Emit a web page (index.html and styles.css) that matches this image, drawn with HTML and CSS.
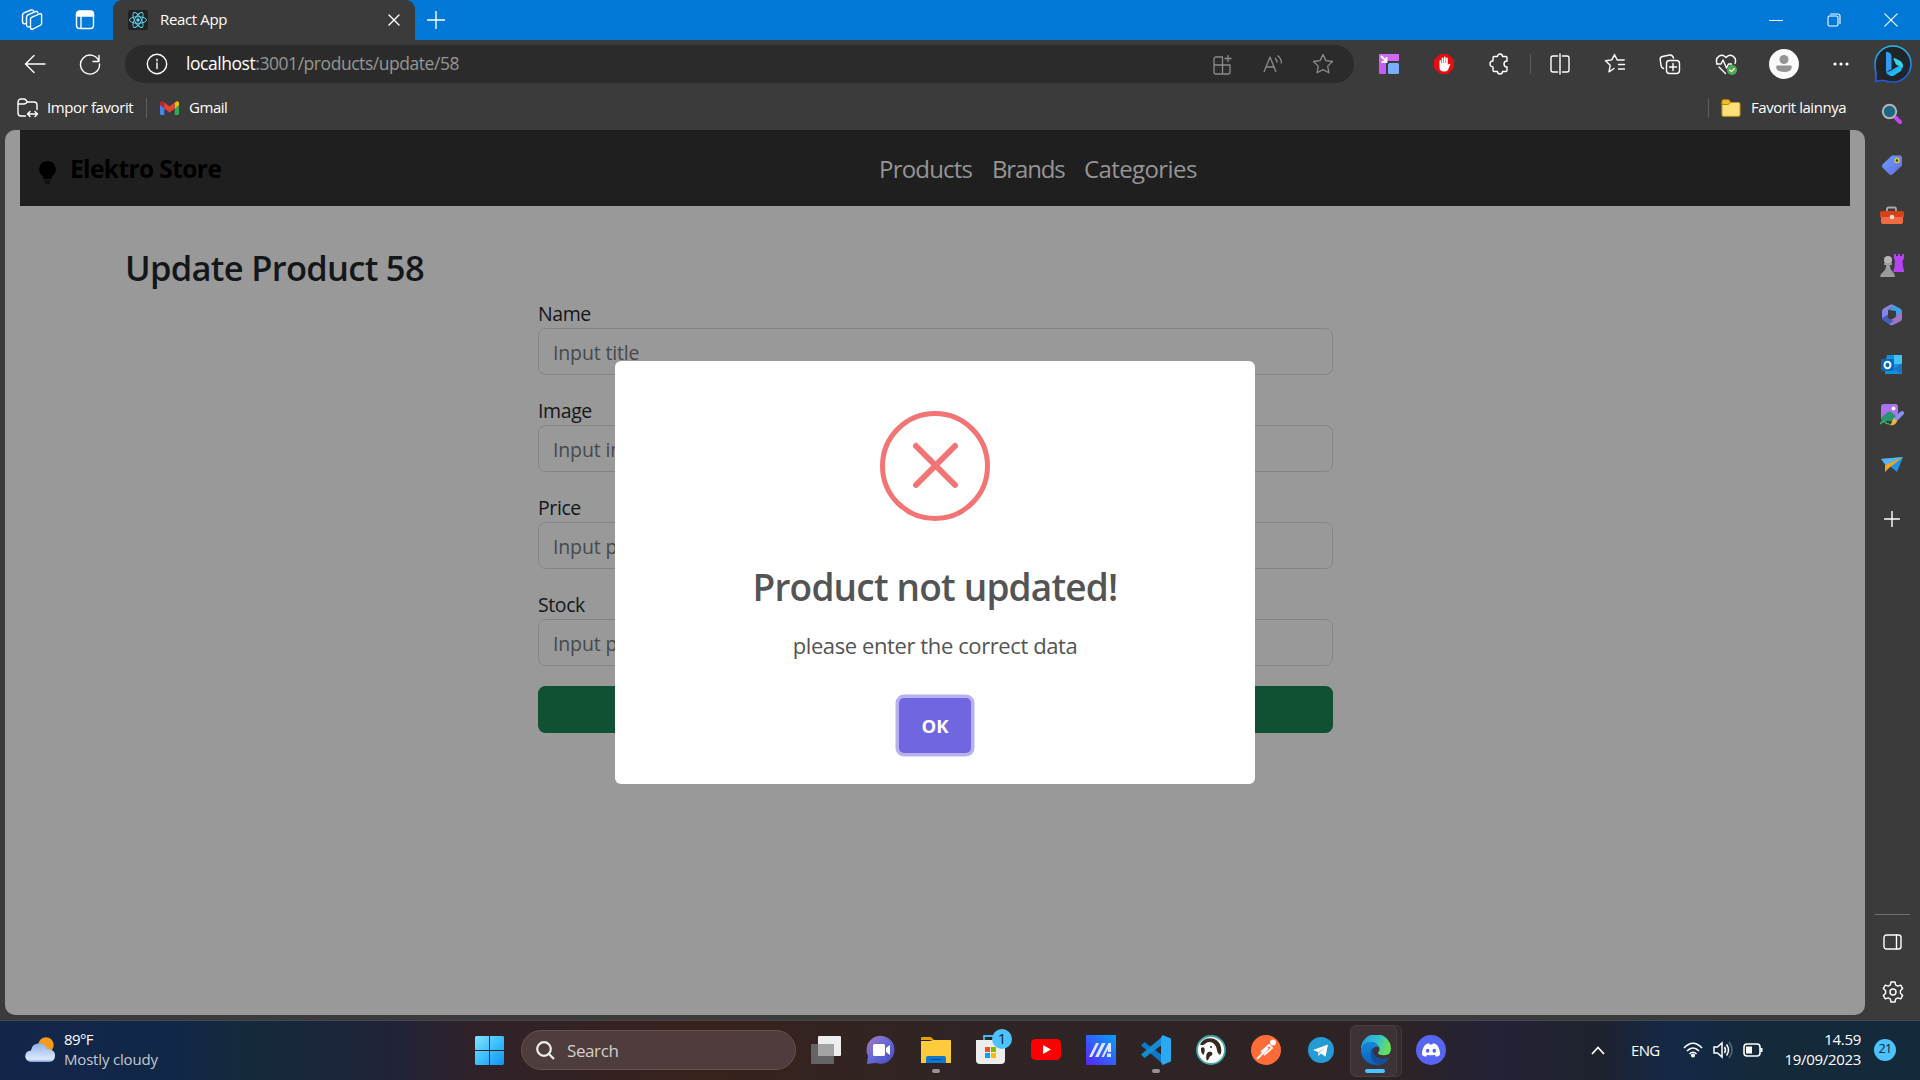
FILE: index.html
```html
<!DOCTYPE html>
<html lang="en">
<head>
<meta charset="utf-8">
<title>React App</title>
<link rel="stylesheet" href="styles.css">
</head>
<body>
<div class="screen">
  <header class="titlebar">
    <div class="tab-tools">
      <svg width="22" height="22" viewBox="0 0 22 22" class="line"><path d="M9.500 10Q9.500 8.800 10.600 8.300L18.500 4.800Q20.600 4.300 20.600 6.200V14.500Q20.600 15.600 19.500 16.200L12 20Q9.500 21 9.500 18.500Z"/><path d="M8.500 17.800Q5.500 18.300 5.500 15.500V8Q5.500 6.500 7 5.800L14.500 2.500Q16.500 2 16.800 4"/><path d="M4.500 14.800Q1.500 15.200 1.500 12.500V6Q1.500 4.500 3 3.800L10 1Q12 .6 12.500 2"/></svg>
      <svg width="20" height="20" viewBox="0 0 20 20" class="line"><rect x="1.500" y="1.500" width="17" height="17" rx="3"/><path d="M1.500 6V4a3 3 0 0 1 3-3h11a3 3 0 0 1 3 3v2z" fill="#fff"/><path d="M6 6v12"/></svg>
    </div>
    <div class="tab">
      <svg width="20" height="20" viewBox="0 0 20 20"><rect width="20" height="20" rx="2" fill="#222"/><g fill="none" stroke="#61dafb" stroke-width=".9"><ellipse cx="10" cy="10" rx="8.500" ry="3.300"/><ellipse cx="10" cy="10" rx="8.500" ry="3.300" transform="rotate(60 10 10)"/><ellipse cx="10" cy="10" rx="8.500" ry="3.300" transform="rotate(120 10 10)"/></g><circle cx="10" cy="10" r="1.700" fill="#61dafb"/></svg>
      <span class="tab-title">React App</span>
      <svg width="12" height="12" viewBox="0 0 12 12" class="line"><path d="M1 1l10 10M11 1 1 11"/></svg>
    </div>
    <svg class="new-tab line" width="18" height="18" viewBox="0 0 18 18"><path d="M9 .5v17M.5 9h17"/></svg>
    <div class="window-controls">
      <svg width="14" height="14" viewBox="0 0 14 14" class="line thin"><path d="M.5 7.500h13"/></svg>
      <svg width="14" height="14" viewBox="0 0 14 14" class="line thin"><rect x="1" y="3" width="10" height="10" rx="1.500"/><path d="M3.500 1H11q2 0 2 2v7.500"/></svg>
      <svg width="14" height="14" viewBox="0 0 14 14" class="line thin"><path d="M.8.8l12.400 12.400M13.200.8.800 13.200"/></svg>
    </div>
  </header>

  <div class="browser">
    <div class="main-column">
      <div class="toolbar">
        <svg class="back line" width="22" height="20" viewBox="0 0 22 20"><path d="M21 10H1.500M10 1.500 1.500 10l8.500 8.500"/></svg>
        <svg class="reload line" width="22" height="22" viewBox="0 0 22 22"><path d="M20 8.500A9.500 9.500 0 1 0 20.500 11M20 2.500v6h-6"/></svg>
        <div class="address">
          <svg width="22" height="22" viewBox="0 0 22 22" class="line"><circle cx="11" cy="11" r="9.700"/><path d="M11 10v5.500M11 6.200v1.600"/></svg>
          <span class="url"><b>localhost</b>:3001/products/update/58</span>
          <div class="address-actions">
            <svg width="22" height="22" viewBox="0 0 22 22"><path d="M11 4H4a2 2 0 0 0-2 2v13a2 2 0 0 0 2 2h12a2 2 0 0 0 2-2v-7H2M10.500 4v17M16 2v7M12.500 5.500h7"/></svg>
            <svg width="22" height="22" viewBox="0 0 22 22"><path d="M2 19 8 4l6 15M4 14h8M13 5q2 1.500 2 4.500M15.500 2.500q4 3 4 8"/></svg>
            <svg width="22" height="22" viewBox="0 0 22 22"><path d="M11 1.500l2.900 6.100 6.600.9-4.800 4.600 1.200 6.700-5.900-3.200-5.900 3.200 1.200-6.700L1.500 8.500l6.600-.9z"/></svg>
          </div>
        </div>
        <div class="extensions">
          <svg width="20" height="20" viewBox="0 0 20 20"><path d="M1 0h18q1 0 1 1v6H7v13H1q-1 0-1-1V1q0-1 1-1z" fill="#c45cf5"/><path d="M1 0h18q1 0 1 1v6H0V1q0-1 1-1z" fill="#cf6bf6"/><rect x="9" y="9" width="11" height="11" rx="1.500" fill="#79adff"/><path d="M2 2l5 5M7.500 3v5h-5" stroke="#fff" stroke-width="1.800" fill="none"/></svg>
          <svg width="22" height="22" viewBox="0 0 22 22"><path d="M7 1h8l6 6v8l-6 6H7l-6-6V7z" fill="#e60d12"/><path d="M6.500 11V7.500q1-1 1.600 0V10h.6V5q1-1 1.700 0v5h.5V4q1-1 1.700 0v6h.5V5q1-1 1.700 0v7q2-2 2.500-.5L15 17q-1 1.500-4 1.500-4.500 0-4.500-4z" fill="#fff"/></svg>
          <svg width="22" height="22" viewBox="0 0 22 22" class="line"><path d="M5.200 3.500h3.300a2.500 2.500 0 0 1 5 0h3.300q1.200 0 1.200 1.200V8a2.800 2.800 0 1 0 0 6v3.300q0 1.200-1.200 1.200h-3.300a2.500 2.500 0 0 1-5 0H5.200Q4 18.500 4 17.300V14a2.800 2.800 0 1 1 0-6V4.700q0-1.200 1.200-1.200z"/></svg>
        </div>
        <i class="rule"></i>
        <div class="browser-tools">
          <svg width="22" height="22" viewBox="0 0 22 22" class="line"><path d="M8.500 3H4a2 2 0 0 0-2 2v12a2 2 0 0 0 2 2h4.500M13.500 3H18a2 2 0 0 1 2 2v12a2 2 0 0 1-2 2h-4.500M11 1v20"/></svg>
          <svg width="22" height="22" viewBox="0 0 22 22" class="line"><path d="M10 15.500l-5 3.300 1.200-6.500-4.700-4.500 6.300-.9L10.500 1.500 13.200 7h7M14.500 11.500h6M14.500 16h6"/></svg>
          <svg width="22" height="22" viewBox="0 0 22 22" class="line"><rect x="7.500" y="7.500" width="13" height="13" rx="3"/><path d="M14 10.500v7M10.500 14h7M4.500 15.500Q2.500 15 2 12.500L1.200 6.500Q1 4 3.500 3.500l7-1.500Q13.500 1.500 14.500 5"/></svg>
          <svg width="22" height="22" viewBox="0 0 22 22" class="line"><path d="M2 10.500C-.5 4 7-.5 11 4.500c4-5 11.500-.5 9 6M4 14l6.500 6.500M1.500 11H6l2-4 3.500 8 2-4h3"/><circle cx="17" cy="17" r="5" fill="#4ead50" stroke="none"/><path d="M14.800 17l1.600 1.600 3-3" stroke-width="1.200"/></svg>
        </div>
        <div class="account">
          <svg width="30" height="30" viewBox="0 0 30 30"><circle cx="15" cy="15" r="15" fill="#fafafa"/><circle cx="15" cy="10.500" r="4.500" fill="#949494"/><path d="M8 16.500h14q.8 0 .8 1.200 0 5.300-7.800 5.300t-7.800-5.300q0-1.200.8-1.200z" fill="#949494"/></svg>
          <svg width="18" height="6" viewBox="0 0 18 6" fill="#fff"><circle cx="3" cy="3" r="1.600"/><circle cx="9" cy="3" r="1.600"/><circle cx="15" cy="3" r="1.600"/></svg>
        </div>
      </div>

      <div class="bookmarks">
        <svg width="22" height="20" viewBox="0 0 22 20" class="line"><path d="M8.500 18H4a3 3 0 0 1-3-3V4a3 3 0 0 1 3-3h3q1 0 2 1.200L10.500 4H17a3 3 0 0 1 3 3v4.500M1.500 6H7q1.500 0 3.500-2M10.500 16h10M13 13.500 10.500 16l2.500 2.500M18 13.500l2.500 2.500-2.500 2.500"/></svg>
        <span class="bm-import">Impor favorit</span>
        <i class="rule"></i>
        <svg width="19" height="14" viewBox="0 0 19 14"><path d="M0 2h4.300v12H1.500Q0 14 0 12.500z" fill="#4285f4"/><path d="M14.700 2H19v10.500q0 1.500-1.500 1.500h-2.800z" fill="#34a853"/><path d="M14.700 2Q17-1 19 1.500V4l-4.300 3.500z" fill="#fbbc04"/><path d="M0 4V1.800Q1.500-1 4.300 1.500v6z" fill="#c5221f"/><path d="M4.300 1.500l5.200 4 5.200-4v6l-5.200 4-5.200-4z" fill="#ea4335"/></svg>
        <span class="bm-gmail">Gmail</span>
        <div class="bookmarks-other">
          <i class="rule"></i>
          <svg width="20" height="18" viewBox="0 0 20 18"><path d="M1 3v13q0 1.300 1.300 1.300h15.400q1.300 0 1.300-1.300V5q0-1.500-1.300-1.500H10z" fill="#ffdf7c" stroke="#c89614"/><path d="M1 5.500V2Q1 .7 2.300.7H7q1 0 1.500.8l1 1.700-2 2.300z" fill="#f0bd2a" stroke="#b88508"/></svg>
          <span class="bm-other">Favorit lainnya</span>
        </div>
      </div>

      <main class="viewport">
        <nav class="navbar">
          <div class="brand">
            <svg width="17" height="23" viewBox="0 0 17 23"><path d="M8.500 0a8.200 8.200 0 0 1 4.300 15.200V18H4.200v-2.800A8.200 8.200 0 0 1 8.500 0zM5 19.500h7v1H5zM6 21.500h5v1H6z"/></svg>
            <span>Elektro Store</span>
          </div>
          <div class="nav-links"><a class="products">Products</a><a class="brands">Brands</a><a class="categories">Categories</a></div>
        </nav>
        <h2 class="page-title"><span>Update Product 58</span></h2>
        <form class="product-form">
          <label>Name</label><div class="field">Input title</div>
          <label>Image</label><div class="field">Input image</div>
          <label>Price</label><div class="field">Input price</div>
          <label>Stock</label><div class="field">Input price</div>
          <div class="submit"></div>
        </form>
        <section class="modal">
          <svg width="110" height="110" viewBox="0 0 110 110" fill="none" stroke="#f27474" stroke-width="5"><circle cx="55" cy="55" r="52.500"/><path d="M36 35 75 74M75 35 36 74" stroke-width="6" stroke-linecap="round"/></svg>
          <h1>Product not updated!</h1>
          <p>please enter the correct data</p>
          <button type="button">OK</button>
        </section>
      </main>
    </div>

    <aside class="sidebar">
      <svg class="bing" width="38" height="38" viewBox="0 0 38 38"><defs><linearGradient id="bingRing" x1="0" y1="0" x2="0" y2="1"><stop offset="0" stop-color="#27bdf0"/><stop offset="1" stop-color="#2455d8"/></linearGradient><linearGradient id="bingB" x1="0" y1="0" x2="1" y2="1"><stop offset="0" stop-color="#2870f4"/><stop offset=".6" stop-color="#1dbdf3"/><stop offset="1" stop-color="#45e0d0"/></linearGradient></defs><path d="M1.500 36.500Q2.500 33 2 28 1 24 1 19A18 18 0 1 1 19 37q-4 0-8-1.200-4-.8-9.500.7z" fill="#20252a" stroke="url(#bingRing)" stroke-width="1.600"/><path d="M12 8q0-2 2-1l2 1.200q1.500 1 1.500 3V24l-5.500 3z" fill="#2f9df5"/><path d="M19.500 14q0-1.500 2-.5l4 2q3.500 2 3.500 5.500 0 1.500-1 2.500-1-1.500-3-2.500l-3-1.500z" fill="#35d6ea"/><path d="M12 25q1 2.500 4 1l9-5.300q3 1.300 2.800 3.300-.3 1.500-2 2.800l-6 3.700q-2 1.200-4 0L13 29q-1-1.300-1-4z" fill="url(#bingB)"/></svg>
      <div class="side-apps">
        <svg width="22" height="22" viewBox="0 0 22 22"><path d="M14 14l5 5" stroke="#c843f2" stroke-width="4" stroke-linecap="round"/><circle cx="8.500" cy="8.500" r="6.700" fill="#216483" stroke="#b0b5b6" stroke-width="2"/></svg>
        <svg width="22" height="22" viewBox="0 0 22 22"><defs><linearGradient id="tag" x1="0" y1="0" x2="1" y2="1"><stop offset="0" stop-color="#64a4fb"/><stop offset="1" stop-color="#6b67e7"/></linearGradient></defs><path d="M11 1.500h8q2 0 2 2v8L11.500 20.500q-2 1-3.500-.5l-6.500-6.500q-1-1.500 0-3z" fill="url(#tag)"/><circle cx="16" cy="6.500" r="2" fill="#334" stroke="#f3cf22" stroke-width="1.300"/></svg>
        <svg width="24" height="20" viewBox="0 0 24 20"><path d="M7 6V3q0-1.500 1.500-1.500h6Q16 1.500 16 3v3" stroke="#aaa" stroke-width="1.800" fill="none"/><rect x="1" y="6" width="22" height="12" rx="2" fill="#f06a42"/><path d="M0 7q0-2 2-2h20q2 0 2 2v4H0z" fill="#d84118"/><circle cx="12" cy="11" r="2.300" fill="#ddd"/></svg>
        <svg width="24" height="24" viewBox="0 0 24 24"><path d="M14 0h2v2h2V0h2v2h2V0h2v4.500L22.500 7l.7 7 .8 1.500V18H13.500v-2.500l1-1.500.5-7L14 4.500z" fill="#b443f2"/><circle cx="8" cy="6" r="4" fill="#b5b5b5"/><path d="M4 9h8v2h-2q0 5 3 7 2 2 2 5H0q0-3 3-5 3-2 3-7H4z" fill="#9b9b9b"/></svg>
        <svg width="22" height="22" viewBox="0 0 22 22"><path d="M9 .8 2.500 4.500Q1 5.500 1 7.500v8l6-3V7q0-1 1-1.500L14 2 12 .8q-1.500-.8-3 0z" fill="#8884e2"/><path d="M12 .8l7.500 4Q21 6 21 7.500V14l-6-3.500V7L8 6l5-3.500z" fill="#37a4e9"/><path d="M21 7.500v7q0 2-1.500 2.700L12 21q-2 .8-3.500-.2L8 17l6-3.500q1-.7 1-2z" fill="#9c75c9"/><path d="M1 14l6-3.500V14l5.500 3L8 20.500l-5-3.500q-2-1-2-3z" fill="#415fb8"/></svg>
        <svg width="22" height="20" viewBox="0 0 22 20"><path d="M6 0h14q1 0 1 1v18H4V9z" fill="#1490df"/><path d="M13 0h7q1 0 1 1v8h-8z" fill="#41c4f4"/><path d="M21 8v12l-8-6z" fill="#1b74c7"/><rect y="4" width="13" height="12" rx="1.200" fill="#0868be"/><ellipse cx="6.500" cy="10" rx="3" ry="3.300" stroke="#fff" stroke-width="1.900" fill="none"/></svg>
        <svg width="24" height="24" viewBox="0 0 24 24"><rect x="1" y="1" width="17" height="16" rx="2.500" fill="#ab72ec"/><path d="M1 15 8 9q1.500-1 3 0l7 6v2q0 1-2 1H3q-2 0-2-2z" fill="#27956b"/><circle cx="13.500" cy="5.500" r="1.900" fill="#fff"/><path d="M22 10 15 17" stroke="#8a90f5" stroke-width="4" stroke-linecap="round"/><path d="M14 15l3 3q-1 5-8 4 3-1 3-4z" fill="#f0b63b"/><path d="M0 21q4-4 5-2t4 2" stroke="#3abd7c" stroke-width="1.500" fill="none"/></svg>
        <svg width="22" height="16" viewBox="0 0 22 16"><path d="M0 2 22 0 16 15z" fill="#2492e4"/><path d="M22 0 4 8v7l4-4z" fill="#f3a713"/><path d="M0 2 22 0 4.500 8z" fill="#5bb4f4"/></svg>
        <svg width="16" height="16" viewBox="0 0 16 16" class="line"><path d="M8 .5v15M.5 8h15"/></svg>
      </div>
      <div class="side-bottom">
        <svg width="20" height="16" viewBox="0 0 20 16" class="line"><rect x="1" y="1" width="17" height="14" rx="2.500"/><path d="M13.500 1v14"/></svg>
        <svg width="22" height="22" viewBox="0 0 22 22" class="line"><path d="M9 1h4l.7 3 2 1.100 3-.9 2 3.400-2.300 2.200v2.400l2.300 2.200-2 3.400-3-.9-2 1.100L13 21H9l-.7-3-2-1.100-3 .9-2-3.400 2.300-2.200V9.800L1.300 7.600l2-3.400 3 .9 2-1.100z"/><circle cx="11" cy="11" r="3"/></svg>
      </div>
    </aside>
  </div>

  <footer class="taskbar">
    <div class="weather">
      <svg width="30" height="26" viewBox="0 0 30 26"><defs><linearGradient id="cloud" x1="0" y1="0" x2="0" y2="1"><stop offset="0" stop-color="#8fb2ef"/><stop offset=".85" stop-color="#dce9fb"/><stop offset="1" stop-color="#7899dd"/></linearGradient></defs><circle cx="21" cy="8" r="7.700" fill="#f49a1c"/><path d="M6 25a5.800 5.800 0 0 1 0-11.600Q7 6.500 14 6.500q6.500 0 8 5.500 8 0 8 6.500T24 25z" fill="url(#cloud)"/></svg>
      <div><span class="temp">89°F</span><span class="sky">Mostly cloudy</span></div>
    </div>
    <div class="task-center">
      <svg width="29" height="29" viewBox="0 0 29 29"><defs><linearGradient id="win" x1="0" y1="0" x2="1" y2="1"><stop offset="0" stop-color="#83e0fd"/><stop offset=".5" stop-color="#3dc0fd"/><stop offset="1" stop-color="#0f94f5"/></linearGradient></defs><path d="M1 0h13v14H0V1zM15 0h13l1 1v13H15zM0 15h14v14H1l-1-1zM15 15h14v13l-1 1H15z" fill="url(#win)"/></svg>
      <div class="search"><svg width="19" height="19" viewBox="0 0 19 19" fill="none" stroke="#eee" stroke-width="2.200"><circle cx="8" cy="8" r="6.800"/><path d="M13 13l5 5"/></svg><span>Search</span></div>
      <div class="apps">
        <div class="app"><svg width="30" height="28" viewBox="0 0 30 28"><rect y="8" width="23" height="20" rx="1" fill="#646464"/><rect x="7" width="23" height="20" rx="1" fill="#eee"/><rect x="7" y="8" width="16" height="12" fill="#a4a4a4"/></svg></div>
        <div class="app"><svg width="30" height="30" viewBox="0 0 30 30"><defs><linearGradient id="chat" x1="0" y1="0" x2="1" y2="1"><stop offset="0" stop-color="#a879bd"/><stop offset=".5" stop-color="#6369d5"/><stop offset="1" stop-color="#4948b9"/></linearGradient></defs><path d="M1 29l1-8A14 14 0 1 1 10 28z" fill="url(#chat)"/><rect x="7" y="9" width="12" height="12" rx="1.500" fill="#fff"/><path d="M20 13l4-3v10l-4-3z" fill="#fff"/></svg></div>
        <div class="app running"><svg width="30" height="28" viewBox="0 0 30 28"><path d="M0 4V2q0-1 1-1h9l3 3h-3z" fill="#e1a008"/><path d="M0 5h9l3-1h17q1 0 1 1v22H0z" fill="#ffca3b"/><path d="M5 27v-5q0-2 2-2h16q2 0 2 2v5z" fill="#0f78cf"/><path d="M9 23.500h12" stroke="#0a4f93"/></svg></div>
        <div class="app"><svg width="30" height="30" viewBox="0 0 30 30"><path d="M8 6V1h13v5" fill="none" stroke="#3bbcf3" stroke-width="1.800"/><path d="M0 5h29v20q0 4-4 4H4q-4 0-4-4z" fill="#ededed"/><path d="M9 12h5v5H9z" fill="#f25022"/><path d="M15 12h5v5h-5z" fill="#7fba00"/><path d="M9 18h5v5H9z" fill="#00a4ef"/><path d="M15 18h5v5h-5z" fill="#ffb900"/></svg><span class="badge">1</span></div>
        <div class="app"><svg width="30" height="22" viewBox="0 0 30 22"><rect width="30" height="21" rx="4.500" fill="#f00"/><path d="M12 6v9l8-4.500z" fill="#fff"/></svg></div>
        <div class="app"><svg width="30" height="30" viewBox="0 0 30 30"><defs><linearGradient id="armoury" x1="1" y1="0" x2="0" y2="1"><stop offset="0" stop-color="#05a1ff"/><stop offset="1" stop-color="#5b23f8"/></linearGradient></defs><path d="M0 0h30v30H0z" fill="url(#armoury)"/><path d="M3 22 10 8h3L6 22zM9 22l7-14h3.500l-7 14zM15.500 22 22.500 8H25v9h-3.200V14l-4 8z" fill="#dce7ff"/><path d="M21 18.500h4V22h-4z" fill="#dce7ff"/></svg></div>
        <div class="app running"><svg width="30" height="30" viewBox="0 0 30 30"><path d="M0 10.500 3.500 7 22 21v8z" fill="#0b79c7"/><path d="M0 19.500 3.500 23 22 9V1z" fill="#158bd3"/><path d="M21.500 0 30 3.500v23L21.500 30 20 27V3z" fill="#2aa9f3"/></svg></div>
        <div class="app"><svg width="30" height="30" viewBox="0 0 30 30"><circle cx="15" cy="15" r="14" fill="#fff" stroke="#48a6a8" stroke-width="1.800"/><path d="M4 9.500Q6 5 11 3.500 17 2.300 21 5.500q3 2.500 4 7 1 4.500-1 7.500-2.500-1-3-4.500-.5-5-4-7.500-4-2-7.500.5Q7 11 4 9.500z" fill="#352921"/><path d="M5 13q2-1.500 3.500 0 1 3-1 7Q4.500 18 5 13z" fill="#352921"/><path d="M10.500 19q1-2.500 3.500-2.500 2.500.3 2.500 2.500-.5 2-2.500 2.300-1 2.700-3 4.700-1.500-3-.5-7z" fill="#352921"/><circle cx="15" cy="12" r="1" fill="#352921"/></svg></div>
        <div class="app"><svg width="30" height="30" viewBox="0 0 30 30"><circle cx="15" cy="15" r="15" fill="#ff6c37"/><circle cx="22" cy="7.500" r="3" fill="#fff"/><path d="M6 24 17 13M10 17l8-7 3 3-8 7" stroke="#fff" stroke-width="1.800" fill="none"/></svg></div>
        <div class="app"><svg width="26" height="26" viewBox="0 0 26 26"><circle cx="13" cy="13" r="13" fill="#259bd5"/><path d="M5 13 20 7.500l-2.500 12.200-4.500-3.300-2.500 2.500-.5-4z" fill="#fff"/><path d="M10 15l7.500-5.500-5.500 6-1.500 3.400z" fill="#b7d7e9"/></svg></div>
        <div class="app active"><svg width="30" height="30" viewBox="0 0 30 30"><defs><linearGradient id="edgeTop" x1="0" y1="0" x2="1" y2=".3"><stop offset="0" stop-color="#209bdd"/><stop offset=".6" stop-color="#35c3cf"/><stop offset="1" stop-color="#66df5a"/></linearGradient><linearGradient id="edgeSide" x1="0" y1="0" x2="0" y2="1"><stop offset="0" stop-color="#1689dc"/><stop offset="1" stop-color="#0b62bb"/></linearGradient></defs><path d="M0 14.500A15 15 0 0 1 30 13.500q0 7-7.500 6.700-5 0-5.500-2.200 0-.7 1-1.800 1-1.600 0-4Q15.500 7 9.500 7 2.500 7.500 0 14.500z" fill="url(#edgeTop)"/><path d="M0 15q1-8.300 9.500-8.300 6.500.3 8.500 5.500-5-1.500-6.500 3-1 5 3.500 9 5 4 11.500 1.500Q22 30 15 30A15 15 0 0 1 0 15z" fill="url(#edgeSide)"/><path d="M12.500 12q-2 5.500 2 9 5 4.500 12.500 1.500 1-.3.600.8-3.100 5.700-9.600 6.200Q10 28 9.500 19q0-4.500 3-7z" fill="#154f97"/></svg></div>
        <div class="app"><svg width="30" height="30" viewBox="0 0 30 30"><circle cx="15" cy="15" r="15" fill="#5865f2"/><path d="M9 10q2-1.500 4-1.700l.7 1.200h2.600l.7-1.200q2 .2 4 1.700 3.500 5 3 10-2 1.500-4 1.800l-1.200-2q-3.800 1-7.600 0l-1.200 2Q8 21.500 6 20q-.5-5 3-10z" fill="#fff"/><ellipse cx="11.700" cy="15.700" rx="1.800" ry="2" fill="#5865f2"/><ellipse cx="18.300" cy="15.700" rx="1.800" ry="2" fill="#5865f2"/></svg></div>
      </div>
    </div>
    <div class="tray">
      <svg class="chevron" width="14" height="9" viewBox="0 0 14 9" fill="none" stroke="#fff" stroke-width="1.800"><path d="M1 8l6-6.500L13 8"/></svg>
      <span class="lang">ENG</span>
      <div class="status">
        <svg width="20" height="16" viewBox="0 0 20 16" fill="none" stroke="#fff" stroke-width="1.600"><path d="M1 6q9-9.500 18 0M4 9q6-6 12 0M6.500 12q3.500-3.500 7 0"/><circle cx="10" cy="13.500" r="1.300" fill="#fff"/></svg>
        <svg width="20" height="18" viewBox="0 0 20 18" fill="none" stroke="#fff" stroke-width="1.500"><path d="M1 6h3.500L9 2v14l-4.500-4H1zM11.500 6q2 3 0 6M13.500 3.500q4 5.500 0 11"/><path d="M16 1q6 8 0 16" stroke="#596a77"/></svg>
        <svg width="20" height="14" viewBox="0 0 20 14" fill="none" stroke="#fff" stroke-width="1.600"><rect x="1" y="1" width="16" height="12" rx="3"/><path d="M3 3.500h6v7H3z" fill="#fff" stroke="none"/><path d="M18.500 5v4" stroke-width="2"/></svg>
      </div>
      <div class="clock"><span class="time">14.59</span><span class="date">19/09/2023</span></div>
      <span class="notice">21</span>
    </div>
  </footer>
</div>
</body>
</html>
```
FILE: styles.css
```css
* { box-sizing: border-box; }
body {
  margin: 0;
  overflow: hidden;
  font-family: "Open Sans", "Noto Sans", sans-serif;
}
svg { display: block; flex: none; }
.line { fill: none; stroke: #fff; stroke-width: 1.4; stroke-linecap: round; stroke-linejoin: round; }
.thin { stroke-width: 1.1; }
.rule { flex: none; width: 1px; height: 20px; background: #5f5f5f; }
span, a, label, h1, p { white-space: nowrap; }

.screen { width: 1920px; height: 1080px; display: flex; flex-direction: column; background: #3b3b3b; color: #fff; }

/* Title bar */
.titlebar { height: 40px; display: flex; align-items: center; background: #0078d7; }
.tab-tools { width: 113px; padding-left: 21px; display: flex; align-items: center; gap: 32px; }
.tab { width: 302px; height: 40px; padding: 0 15px 0 15px; display: flex; align-items: center; background: #3b3b3b; border-radius: 9px 9px 0 0; }
.tab-title { flex: 1; margin-left: 12px; padding-bottom: 2px; font-size: 15px; letter-spacing: -.35px; }
.new-tab { margin-left: 12px; }
.window-controls { margin-left: auto; padding-right: 22px; display: flex; gap: 43.500px; }

.browser { flex: 1; display: flex; min-height: 0; }
.main-column { width: 1865px; display: flex; flex-direction: column; }

/* Toolbar */
.toolbar { height: 48px; display: flex; align-items: center; }
.back { margin-left: 24px; }
.reload { margin-left: 33px; }
.address { width: 1229px; height: 38px; margin-left: 24px; padding: 0 20px 0 21px; display: flex; align-items: center; border-radius: 19px; background: #2b2b2b; }
.url { margin-left: 18px; padding-bottom: 2px; font-size: 17.500px; letter-spacing: -.45px; color: #969696; }
.url b { font-weight: 400; color: #fff; }
.address-actions { margin-left: auto; display: flex; gap: 28px; }
.address-actions svg { fill: none; stroke: #8c8c8c; stroke-width: 1.3; stroke-linejoin: round; }
.extensions { margin-left: 25px; display: flex; align-items: center; gap: 34px; }
.extensions + .rule { margin-left: 19px; }
.browser-tools { margin-left: 18px; display: flex; gap: 33.200px; }
.account { margin-left: 32px; display: flex; align-items: center; gap: 33px; }

/* Bookmark bar */
.bookmarks { height: 42px; display: flex; align-items: center; padding: 0 19px 3px 17px; font-size: 15px; }
.bookmarks span { padding-bottom: 2px; }
.bm-import { margin: 0 12px 0 8px; width: 87px; letter-spacing: -.4px; }
.bookmarks > .rule + svg { margin-left: 13px; }
.bm-gmail { margin-left: 10px; letter-spacing: -.45px; }
.bookmarks-other { margin-left: auto; display: flex; align-items: center; }
.bookmarks-other svg { margin: 0 10px 0 12px; }
.bm-other { width: 95px; letter-spacing: -.45px; }

/* Web page under the dialog */
.viewport { position: relative; width: 1860px; height: 885px; margin-left: 5px; padding: 0 15px; border-radius: 10px; background: #999; overflow: hidden; }
.navbar { height: 76px; padding: 0 18px; display: flex; align-items: center; background: #1f1f1f; }
.brand { width: 841px; display: flex; align-items: center; gap: 14px; color: #000; font-size: 24.500px; font-weight: 700; letter-spacing: -.6px; }
.brand svg { margin-left: 1px; margin-top: 8px; }
.nav-links { display: flex; gap: 20px; font-size: 24px; color: #959595; }
.products { width: 93px; letter-spacing: -.8px; }
.brands { width: 72px; letter-spacing: -1.150px; }
.categories { letter-spacing: -.6px; }
.page-title { margin: 36px 0 0 105px; height: 52px; line-height: 52px; font-size: 34.500px; font-weight: 600; letter-spacing: -.7px; color: #141719; }
.product-form { width: 795px; margin: 5px 0 0 518px; color: #141719; font-size: 19.500px; letter-spacing: -.4px; }
.product-form label { display: block; height: 29px; line-height: 30px; }
.field { height: 47px; margin-bottom: 21px; padding: 0 14px; line-height: 48px; border: 1px solid #838689; border-radius: 7.500px; color: #46494c; letter-spacing: -.15px; }
.submit { height: 47px; margin-top: -1px; border-radius: 7.500px; background: #0f5132; }

/* Dialog */
.modal { position: absolute; left: 610px; top: 231px; width: 640px; height: 423px; padding-top: 50px; display: flex; flex-direction: column; align-items: center; border-radius: 6px; background: #fff; color: #545454; }
.modal h1 { margin: 38px 0 0; line-height: 56px; font-size: 37px; font-weight: 600; letter-spacing: -.8px; }
.modal p { margin: 13px 0 0; line-height: 34px; font-size: 22px; letter-spacing: -.4px; }
.modal button { width: 72px; height: 55px; margin-top: 36px; padding: 0; border: 0; border-radius: 5px; background: #7066e0; box-shadow: 0 0 0 3.500px #b7b2ef; color: #fff; font: 700 18.500px "Open Sans", sans-serif; }

/* Edge sidebar */
.sidebar { width: 55px; display: flex; flex-direction: column; align-items: center; }
.bing { margin-top: 5px; }
.side-apps { margin: 5px 1px 0 0; display: grid; grid-template-rows: 51px 51px 51px 49.500px repeat(4, 49.800px) 59px; place-items: center; }
.side-bottom { width: 35px; height: 101px; margin: auto 0 5px; border-top: 1px solid #6f6f6f; display: grid; grid-template-rows: 50px 50px; place-items: center; padding-top: 2px; }

/* Taskbar */
.taskbar { height: 60px; padding-bottom: 1px; display: flex; align-items: stretch; border-top: 1px solid #46484d; background: linear-gradient(90deg, #12264a 0, #112747 180px, #142a3c 240px, #202338 390px, #30222a 475px, #38221c 700px, #2f2524 950px, #2d2326 1400px, #242236 1490px, #1e222e 1600px, #132947 1670px, #14293a 1760px, #14293a 100%); }
.weather { width: 475px; padding: 0 0 0 25px; display: flex; align-items: center; gap: 9px; font-size: 15px; line-height: 20px; }
.weather span { display: block; }
.weather div, .clock { padding-bottom: 2px; }
.temp { letter-spacing: -.6px; }
.sky { color: #c3c9d0; letter-spacing: -.18px; }
.task-center { display: flex; align-items: center; }
.search { width: 275px; height: 40px; margin: 0 2px 0 17px; padding-left: 14px; display: flex; align-items: center; gap: 12px; border: 1px solid #65514f; border-radius: 20px; background: #4e3d3c; color: #d5cfce; font-size: 17px; letter-spacing: -.4px; }
.apps { display: flex; }
.app { position: relative; width: 55px; height: 58px; display: flex; align-items: center; justify-content: center; }
.running::after, .active::after { content: ""; position: absolute; left: 24px; bottom: 6px; width: 8px; height: 4px; border-radius: 2px; background: #969393; }
.active::before { content: ""; position: absolute; left: 2px; top: 4px; width: 45px; height: 50px; border: 1px solid #483f42; border-radius: 6px; background: #3d3336; box-shadow: 5px 0 0 -1px #352b2e, 5px 0 0 0 #43393c; }
.active svg { position: relative; }
.active::after { left: 17px; width: 20px; background: #4cc2ff; }
.badge { position: absolute; right: 6px; top: 8px; width: 20px; height: 20px; border-radius: 50%; background: #4cc2ff; color: #10222c; font-size: 15px; line-height: 19px; text-align: center; }
.tray { margin-left: auto; padding-right: 24px; display: flex; align-items: center; font-size: 15px; }
.lang { margin: 0 23px 0 26px; padding-bottom: 1px; width: 29px; font-size: 15px; letter-spacing: -.7px; }
.status { display: flex; align-items: center; gap: 10px; }
.clock { width: 98px; margin-right: 13px; text-align: right; line-height: 20px; letter-spacing: -.3px; }
.clock span { display: block; }
.notice { width: 22px; height: 22px; border-radius: 50%; background: #4cc2ff; color: #10222c; font-size: 12.500px; line-height: 20px; letter-spacing: -.6px; text-align: center; }
```
